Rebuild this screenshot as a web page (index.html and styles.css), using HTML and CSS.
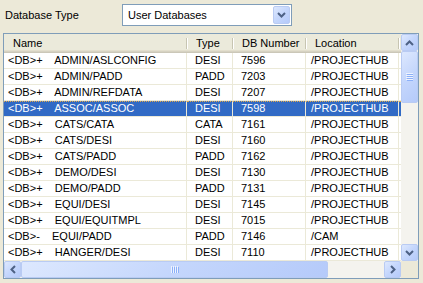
FILE: index.html
```html
<!DOCTYPE html>
<html lang="en">
<head>
  <meta charset="UTF-8" />
  <title>Database Type</title>
  <link rel="stylesheet" href="styles.css">
</head>
<body>
  <div class="panel">
    <div class="type-row">
      <span class="label">Database Type</span>
      <div class="combo">
        <span class="combo-text">User Databases</span>
        <span class="xp-btn combo-btn">
          <svg width="9" height="6" viewBox="0 0 9 6"><path d="M1 1 L4.5 4.5 L8 1" fill="none" stroke="#4d6185" stroke-width="2"/></svg>
        </span>
      </div>
    </div>

    <div class="listbox">
      <div class="list-main">
        <div class="viewport">
          <div class="head">
            <div class="hcell c-name">Name</div>
            <div class="hcell c-type">Type</div>
            <div class="hcell c-num">DB Number</div>
            <div class="hcell c-loc">Location</div>
            <div class="hcell c-rest"></div>
          </div>
          <div class="rows">
            <div class="row"><div class="cell c-name">&lt;DB&gt;+    ADMIN/ASLCONFIG</div><div class="cell c-type">DESI</div><div class="cell c-num">7596</div><div class="cell c-loc">/PROJECTHUB</div><div class="cell c-rest"></div></div>
            <div class="row"><div class="cell c-name">&lt;DB&gt;+    ADMIN/PADD</div><div class="cell c-type">PADD</div><div class="cell c-num">7203</div><div class="cell c-loc">/PROJECTHUB</div><div class="cell c-rest"></div></div>
            <div class="row"><div class="cell c-name">&lt;DB&gt;+    ADMIN/REFDATA</div><div class="cell c-type">DESI</div><div class="cell c-num">7207</div><div class="cell c-loc">/PROJECTHUB</div><div class="cell c-rest"></div></div>
            <div class="row selected"><div class="cell c-name">&lt;DB&gt;+    ASSOC/ASSOC</div><div class="cell c-type">DESI</div><div class="cell c-num">7598</div><div class="cell c-loc">/PROJECTHUB</div><div class="cell c-rest"></div></div>
            <div class="row"><div class="cell c-name">&lt;DB&gt;+    CATS/CATA</div><div class="cell c-type">CATA</div><div class="cell c-num">7161</div><div class="cell c-loc">/PROJECTHUB</div><div class="cell c-rest"></div></div>
            <div class="row"><div class="cell c-name">&lt;DB&gt;+    CATS/DESI</div><div class="cell c-type">DESI</div><div class="cell c-num">7160</div><div class="cell c-loc">/PROJECTHUB</div><div class="cell c-rest"></div></div>
            <div class="row"><div class="cell c-name">&lt;DB&gt;+    CATS/PADD</div><div class="cell c-type">PADD</div><div class="cell c-num">7162</div><div class="cell c-loc">/PROJECTHUB</div><div class="cell c-rest"></div></div>
            <div class="row"><div class="cell c-name">&lt;DB&gt;+    DEMO/DESI</div><div class="cell c-type">DESI</div><div class="cell c-num">7130</div><div class="cell c-loc">/PROJECTHUB</div><div class="cell c-rest"></div></div>
            <div class="row"><div class="cell c-name">&lt;DB&gt;+    DEMO/PADD</div><div class="cell c-type">PADD</div><div class="cell c-num">7131</div><div class="cell c-loc">/PROJECTHUB</div><div class="cell c-rest"></div></div>
            <div class="row"><div class="cell c-name">&lt;DB&gt;+    EQUI/DESI</div><div class="cell c-type">DESI</div><div class="cell c-num">7145</div><div class="cell c-loc">/PROJECTHUB</div><div class="cell c-rest"></div></div>
            <div class="row"><div class="cell c-name">&lt;DB&gt;+    EQUI/EQUITMPL</div><div class="cell c-type">DESI</div><div class="cell c-num">7015</div><div class="cell c-loc">/PROJECTHUB</div><div class="cell c-rest"></div></div>
            <div class="row"><div class="cell c-name">&lt;DB&gt;-    EQUI/PADD</div><div class="cell c-type">PADD</div><div class="cell c-num">7146</div><div class="cell c-loc">/CAM</div><div class="cell c-rest"></div></div>
            <div class="row"><div class="cell c-name">&lt;DB&gt;+    HANGER/DESI</div><div class="cell c-type">DESI</div><div class="cell c-num">7110</div><div class="cell c-loc">/PROJECTHUB</div><div class="cell c-rest"></div></div>
          </div>
        </div>

        <div class="vscroll">
          <span class="xp-btn sb-btn">
            <svg width="9" height="6" viewBox="0 0 9 6"><path d="M1 5 L4.5 1.5 L8 5" fill="none" stroke="#4d6185" stroke-width="2"/></svg>
          </span>
          <span class="xp-btn v-thumb">
            <svg width="7" height="8" viewBox="0 0 7 8"><path d="M0 0.5H7M0 2.5H7M0 4.5H7M0 6.5H7" stroke="#eef3fe" stroke-width="1"/><path d="M1 1.5H8M1 3.5H8M1 5.5H8M1 7.5H8" stroke="#8cb0f8" stroke-width="1"/></svg>
          </span>
          <span class="v-track"></span>
          <span class="xp-btn sb-btn">
            <svg width="9" height="6" viewBox="0 0 9 6"><path d="M1 1 L4.5 4.5 L8 1" fill="none" stroke="#4d6185" stroke-width="2"/></svg>
          </span>
        </div>
      </div>

      <div class="hscroll-row">
        <div class="hscroll">
          <span class="xp-btn sb-btn">
            <svg width="6" height="9" viewBox="0 0 6 9"><path d="M5 1 L1.5 4.5 L5 8" fill="none" stroke="#4d6185" stroke-width="2"/></svg>
          </span>
          <span class="xp-btn h-thumb">
            <svg width="8" height="7" viewBox="0 0 8 7"><path d="M0.5 0V7M2.5 0V7M4.5 0V7M6.5 0V7" stroke="#eef3fe" stroke-width="1"/><path d="M1.5 1V8M3.5 1V8M5.5 1V8M7.5 1V8" stroke="#8cb0f8" stroke-width="1"/></svg>
          </span>
          <span class="h-track"></span>
          <span class="xp-btn sb-btn">
            <svg width="6" height="9" viewBox="0 0 6 9"><path d="M1 1 L4.5 4.5 L1 8" fill="none" stroke="#4d6185" stroke-width="2"/></svg>
          </span>
        </div>
        <div class="corner"></div>
      </div>
    </div>
  </div>
</body>
</html>
```

FILE: styles.css
```css
* { margin: 0; padding: 0; box-sizing: border-box; }
body { font-family: "Liberation Sans", Arial, sans-serif; font-size: 11px; color: #000; background: #ece9d8; }
.panel { width: 423px; height: 283px; padding: 4px 0 0 3px; overflow: hidden; }

.type-row { display: flex; align-items: center; height: 22px; }
.label { width: 119px; padding-left: 2px; }
.combo { display: flex; align-items: center; justify-content: space-between; width: 170px; height: 22px; padding: 1px; border: 1px solid #7f9db9; background: #fff; }
.combo-text { padding-left: 4px; }
.combo-btn { width: 17px; height: 18px; }

.xp-btn { display: flex; align-items: center; justify-content: center; border: 1px solid #b9cbf3; border-radius: 2px; background: linear-gradient(135deg, #dde8fe 0%, #c4d6fc 50%, #b5cafa 100%); }

.listbox { width: 416px; height: 246px; margin-top: 7px; border: 1px solid #7f9db9; background: #fff; display: flex; flex-direction: column; }
.list-main { display: flex; height: 227px; }
.viewport { width: 397px; overflow: hidden; }

.head { display: flex; height: 19px; background: #ebeadb; box-shadow: inset 0 -1px #cbc7b8, inset 0 -2px #d6d2c2, inset 0 -3px #e2decd; }
.hcell { position: relative; flex: none; height: 19px; line-height: 18px; padding-left: 9px; white-space: nowrap; }
.hcell::after { content: ""; position: absolute; right: 0; top: 4px; width: 1px; height: 11px; background: #c7c5b2; box-shadow: 1px 0 #fff; }
.hcell.c-rest::after { display: none; }

.row { display: flex; height: 16px; }
.cell { flex: none; height: 16px; line-height: 15px; padding-left: 8px; border-right: 1px solid #ebe9d8; border-bottom: 1px solid #ebe9d8; white-space: pre; overflow: hidden; }
.cell.c-name { padding-left: 4px; }
.cell.c-loc { padding-left: 5px; }
.row.selected { background: #316ac5; color: #fff; }
.row.selected .cell { border-top: 1px dotted #e0a84a; line-height: 13px; }

.c-name { width: 183px; }
.c-type { width: 46px; }
.c-num { width: 73px; }
.c-loc { width: 93px; }
.c-rest { width: 60px; }

.vscroll { display: flex; flex-direction: column; width: 17px; background: #f4f3ee; }
.sb-btn { flex: none; width: 17px; height: 17px; }
.v-thumb { flex: none; height: 52px; }
.v-track { flex: 1; }

.hscroll-row { display: flex; height: 17px; }
.hscroll { display: flex; width: 397px; background: #f4f3ee; }
.h-thumb { flex: none; width: 307px; }
.h-track { flex: 1; }
.corner { width: 17px; background: #ece9d8; }
```
